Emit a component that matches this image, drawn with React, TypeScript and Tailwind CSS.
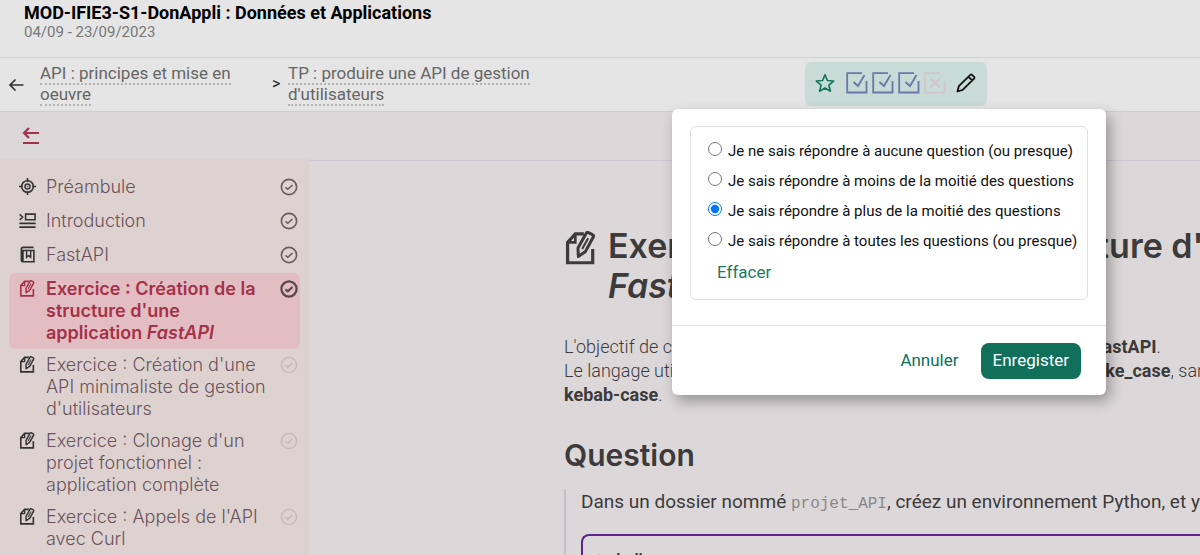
import { useState } from 'react'
import type { ReactNode } from 'react'

type IconName = 'target' | 'intro' | 'book' | 'exercise'

type Entry = {
  id: string
  icon: IconName
  label: ReactNode
  done?: boolean
  active?: boolean
}

const entries: Entry[] = [
  { id: 'preambule', icon: 'target', label: 'Préambule', done: true },
  { id: 'introduction', icon: 'intro', label: 'Introduction', done: true },
  { id: 'fastapi', icon: 'book', label: 'FastAPI', done: true },
  {
    id: 'structure',
    icon: 'exercise',
    label: <>Exercice : Création de la<br />structure d'une<br />application <em>FastAPI</em></>,
    done: true,
    active: true,
  },
  { id: 'minimaliste', icon: 'exercise', label: <>Exercice : Création d'une<br />API minimaliste de gestion<br />d'utilisateurs</> },
  { id: 'clonage', icon: 'exercise', label: <>Exercice : Clonage d'un<br />projet fonctionnel :<br />application complète</> },
  { id: 'curl', icon: 'exercise', label: <>Exercice : Appels de l'API<br />avec Curl</> },
]

const answers = [
  'Je ne sais répondre à aucune question (ou presque)',
  'Je sais répondre à moins de la moitié des questions',
  'Je sais répondre à plus de la moitié des questions',
  'Je sais répondre à toutes les questions (ou presque)',
]

function Icon({ name, className }: { name: IconName; className?: string }) {
  return (
    <svg viewBox="0 0 18 18" className={className} fill="none" stroke="currentColor" strokeWidth="1.7">
      {name === 'target' && (
        <>
          <circle cx="9" cy="9" r="6.2" strokeWidth="1.6" />
          <circle cx="9" cy="9" r="2.7" strokeWidth="1.5" />
          <circle cx="9" cy="9" r=".4" strokeWidth="1" />
          <path d="M9 0v4M9 14v4M0 9h4M14 9h4" />
        </>
      )}
      {name === 'intro' && (
        <path d="M.8 2.5l3 3-3 3M7 2.200h10v6H7zM.4 12h17.200M.4 16h17.200" />
      )}
      {name === 'book' && (
        <>
          <path d="M15.500 1.500H4.500Q2.500 1.500 2.500 3.500V15Q2.500 16.700 4 16.700h11.800V4.800H4" />
          <path d="M4 4v12.500" strokeWidth="2" />
          <path d="M8 5v7l2.200-2 2.200 2V5" strokeWidth="1.500" />
        </>
      )}
      {name === 'exercise' && (
        <>
          <path d="M10.500 1.500H6L1.900 6v10.800h13.300V9.500" />
          <path d="M6 1.500V6H2" strokeWidth="1.400" />
          <path d="M7.600 13.500l-.2-4.500L11.700 1.300q.5-.8 1.300-.4l2 1q.9.500.5 1.300l-4.100 7.600z" strokeWidth="1.600" strokeLinejoin="round" />
          <path d="M9.600 9.500l3.200-5.700" strokeWidth="1.100" />
        </>
      )}
    </svg>
  )
}

function CheckCircle({ className }: { className: string }) {
  return (
    <svg viewBox="0 0 18 18" className={className} fill="none" stroke="currentColor">
      <circle cx="9" cy="9" r="7.600" />
      <path d="M5.500 9.300l2.300 2 4.700-4.300" />
    </svg>
  )
}

function Box({ missed }: { missed?: boolean }) {
  return (
    <svg viewBox="0 0 22 22" className={`size-[22px] ${missed ? 'text-[#d0c5c9]' : 'text-[#6977aa]'}`} fill="none" stroke="currentColor" strokeWidth="1.800">
      <path d="M16 1.200H1.200v19.300h19.300V9" />
      {missed ? <path d="M6.500 6.500l9 9M15.500 6.500l-9 9" /> : <path d="M7.500 10l4.500 4 6.500-11" />}
    </svg>
  )
}

function Header() {
  return (
    <header className="bg-[#e5e5e5]">
      <div className="h-[58px] border-b border-[#d0d0d0] px-6 pt-[3px]">
        <h1 className="text-lg leading-5 font-bold text-black">MOD-IFIE3-S1-DonAppli : Données et Applications</h1>
        <p className="text-[15px] leading-[18px] text-[#777]">04/09 - 23/09/2023</p>
      </div>
      <div className="relative flex h-[54px] items-center border-b border-[#cfcdce] pl-2">
        <button type="button" aria-label="Retour" className="mr-4 text-[#333]">
          <svg viewBox="0 0 16 16" className="size-4" fill="none" stroke="currentColor" strokeWidth="1.700">
            <path d="M15.500 8H2.500M7.500 2.500L2 8l5.500 5.500" />
          </svg>
        </button>
        <nav className="flex items-center pb-[2px] text-[17px] leading-[21px] text-[#666]">
          <div className="w-[232px]">
            <a href="#api" className="border-b-2 border-dotted border-[#b4b4b4]">API : principes et mise en<br />oeuvre</a>
          </div>
          <span className="w-4 text-base text-[#222]">&gt;</span>
          <div>
            <a href="#tp" className="border-b-2 border-dotted border-[#b4b4b4]">TP : produire une API de gestion<br />d'utilisateurs</a>
          </div>
        </nav>
        <div className="absolute top-1 left-[805px] flex h-11 w-[182px] items-center rounded-md bg-[#c9dbd6] pb-[2px] pl-[10px]">
          <svg viewBox="0 0 20 20" className="mr-[11px] size-5 text-[#18785e]" fill="none" stroke="currentColor" strokeWidth="1.700" strokeLinejoin="round">
            <path d="M10 1.700l2.400 5.800 6.300.5-4.800 4.100 1.500 6.100L10 14.900l-5.400 3.300 1.500-6.100L1.300 8l6.300-.5z" />
          </svg>
          <div className="flex gap-1">
            <Box />
            <Box />
            <Box />
            <Box missed />
          </div>
          <button type="button" aria-label="Modifier" className="ml-[10px] text-[#111]">
            <svg viewBox="0 0 20 20" className="size-5" fill="none" stroke="currentColor" strokeWidth="1.800" strokeLinejoin="round">
              <path d="M1.500 18.500l1.300-5.300L14.600 1.700q.6-.5 1.200 0l2.500 2.400q.5.600 0 1.200L6.700 16.900zM12.500 3.800l3.700 3.600" />
            </svg>
          </button>
        </div>
      </div>
    </header>
  )
}

function Sidebar() {
  return (
    <aside className="-mt-px w-[310px] shrink-0 bg-[#ddd2d0] pt-3 pr-[10px] pl-[9px] font-[family-name:Inter,sans-serif]">
      <ul>
        {entries.map((e) => (
          <li key={e.id}>
            <a
              href={`#${e.id}`}
              className={`flex rounded-md py-[5px] pl-[10px] text-lg leading-[22px] ${
                e.active ? 'bg-[#e2bec2] font-semibold text-[#a53049]' : 'font-light text-[#6b525c]'
              }`}
            >
              <Icon name={e.icon} className={`mt-[2px] mr-[10px] size-[17px] shrink-0 ${e.active ? '' : 'text-[#333]'}`} />
              <span className="min-h-6 w-[232px] whitespace-nowrap">{e.label}</span>
              <CheckCircle
                className={`mt-[2px] ml-[2px] size-[18px] shrink-0 ${
                  e.active ? 'stroke-[2.200] text-[#594750]' : e.done ? 'stroke-[1.600] text-[#6b5a62]' : 'stroke-[1.400] text-[#c6b7b8]'
                }`}
              />
            </a>
          </li>
        ))}
      </ul>
    </aside>
  )
}

function Dialog() {
  const [picked, setPicked] = useState<number | null>(2)

  return (
    <form
      role="dialog"
      aria-label="Auto-évaluation"
      onSubmit={(ev) => ev.preventDefault()}
      className="absolute top-[109px] left-[672px] w-[434px] rounded-md bg-white shadow-[4px_6px_14px_rgba(0,0,0,0.32)]"
    >
      <div className="px-[18px] pt-[17px] pb-[25px]">
        <fieldset className="h-[174px] rounded-md border border-[#e0e0e0] pt-[9px] pl-[17px]">
          {answers.map((answer, i) => (
            <label key={answer} className="flex h-[30px] items-center gap-[6px] text-[15px] whitespace-nowrap text-[#111]">
              <input type="radio" name="answer" className="mb-1 size-[14px] shrink-0" checked={picked === i} onChange={() => setPicked(i)} />
              {answer}
            </label>
          ))}
          <button type="button" onClick={() => setPicked(null)} className="mt-1 ml-[9px] text-[17px] leading-6 text-[#1d7a60]">
            Effacer
          </button>
        </fieldset>
      </div>
      <div className="flex h-[70px] items-center justify-end gap-[10px] border-t border-[#e0e0e0] pr-[25px] text-[17px]">
        <button type="button" className="px-3 text-[#11705a]">Annuler</button>
        <button type="submit" className="h-9 rounded-lg bg-[#11705a] px-3 text-white">Enregister</button>
      </div>
    </form>
  )
}

function Content() {
  return (
    <main className="min-w-0 grow overflow-hidden border-t border-[#cdc5d0] pt-[65px] pl-[254px] text-[#3c3a3b]">
      <div className="flex whitespace-nowrap">
        <Icon name="exercise" className="mt-[5px] mr-[10px] size-[34px] shrink-0" />
        <h2 className="font-[family-name:Inter,sans-serif] text-[34px] leading-10 font-semibold">
          Exercice : Création de la structure d'une application<br />
          <em>FastAPI</em>
        </h2>
      </div>
      <p className="mt-[29px] text-[18px] leading-6 font-light whitespace-nowrap">
        L'objectif de cet exercice est de poser la structure d'une application <b className="font-bold">FastAPI</b>.<br />
        Le langage utilisé étant Python, les noms des dossiers restent en <b className="font-bold">snake_case</b>, sans utiliser de<br />
        <b className="font-bold">kebab-case</b>.
      </p>
      <h3 className="mt-7 font-[family-name:Inter,sans-serif] text-[30px] leading-10 font-semibold">Question</h3>
      <section className="mt-[14px] border-l-2 border-[#c8c1cd] pl-[15px]">
        <p className="pt-px pb-[18px] text-[19px] leading-6 whitespace-nowrap">
          Dans un dossier nommé <code className="font-[family-name:Liberation_Mono,monospace] text-base leading-6 text-[#888]">projet_API</code>, créez un environnement Python, et y installer FastAPI.
        </p>
        <details className="h-40 rounded-tl-lg border-t-2 border-l-2 border-[#5d2490] pt-[14px] pl-4">
          <summary className="leading-5 font-semibold">Indice</summary>
        </details>
      </section>
    </main>
  )
}

export default function App() {
  return (
    <div className="relative flex h-screen flex-col overflow-hidden bg-[#dcd8d9] font-[family-name:Roboto,sans-serif]">
      <Header />
      <div className="flex h-12 shrink-0 items-center pl-[22px]">
        <button type="button" aria-label="Replier le menu" className="text-[#a53049]">
          <svg viewBox="0 0 18 18" className="size-[18px]" fill="none" stroke="currentColor" strokeWidth="2.200">
            <path d="M17 6H3M7 1L2 6l5 5M1 16h16" />
          </svg>
        </button>
      </div>
      <div className="flex min-h-0 grow">
        <Sidebar />
        <Content />
      </div>
      <Dialog />
    </div>
  )
}
